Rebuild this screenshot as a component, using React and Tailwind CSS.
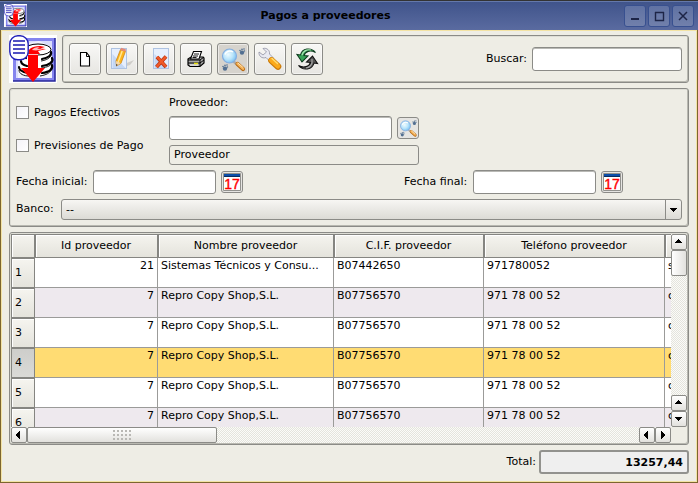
import React from "react";

const FIELD =
  "h-6 min-w-0 rounded-[3px] border border-[#8b8b87] bg-white px-1 shadow-[inset_0_1px_0_#b9b9b5] outline-none";
const TOOL =
  "flex size-8 shrink-0 items-center justify-center rounded-[3px] border border-[#8b8b87] shadow-[inset_0_0_0_1px_#ffffff80]";
const SMALL =
  "flex size-[22px] shrink-0 items-center justify-center rounded-[3px] border border-[#8b8b87] bg-[#e6e5e2]";
const GROUP = "rounded-[3px] border border-[#8b8b87] shadow-[inset_-1px_-1px_0_#b8b8b0,inset_1px_1px_0_#deded6]";
const SCROLL_BTN =
  "flex size-4 shrink-0 items-center justify-center rounded-[2px] border border-[#8b8b87] bg-linear-to-b from-white to-[#e2e1dd]";
const TRACK = "bg-[repeating-conic-gradient(#e4e4dd_0_25%,#fbfbf8_0_50%)] bg-[length:2px_2px]";
const HEAD =
  "overflow-hidden border-r border-b border-[#858581] bg-linear-to-b from-[#f6f5f0] to-[#e4e3dc] p-0 font-normal shadow-[inset_1px_1px_0_#858581,inset_2px_2px_0_#fff]";

function PaymentsLogo({ className }) {
  return (
    <svg viewBox="0 0 48 48" className={className} aria-hidden="true">
      <rect width="48" height="48" fill="#fff" />
      <path d="M4 3H46V46H4z" fill="#8484ee" />
      <path d="M4 46H46V3" fill="none" stroke="#26269a" strokeWidth="1.5" />
      <path d="M7 6H43V43H7z" fill="#d9dcfb" />
      <path d="M9 18L20 8 30 6 43 12V43H9z" fill="#fff" opacity=".6" />
      <g fill="#fff">
        <ellipse cx="26" cy="34" rx="17" ry="7" />
        <ellipse cx="27" cy="27" rx="16" ry="7" />
        <ellipse cx="28" cy="20" rx="15" ry="7" />
      </g>
      <g fill="none" stroke="#000" strokeWidth="2.200" strokeLinecap="round">
        <path d="M42 17c1 3-3 6-9 7M43 23c2 4-3 7-10 8M43 30c1 4-2 7-10 8M17 23c-2-1-3-2-3-4M18 31c-4-1-6-3-6-5M19 38c-6-1-9-3-9-6" />
      </g>
      <g fill="none" stroke="#000" strokeWidth=".9">
        <path d="M42 20c-1 3-4 5-10 6M43 27c-1 4-4 5-11 6M42 35c-1 3-5 5-11 6M10 35c0 4 5 6 10 6" />
      </g>
      <ellipse cx="29" cy="14.500" rx="13" ry="5.500" fill="#fff" stroke="#000" strokeWidth="1" />
      <path d="M20 19c-2-4 2-8 11-8l5 1-5 1.500 6 .5-8 2 2 3H20z" fill="#f00" />
      <path d="M23 15c1-2 4-3 8-3l-3 1.500 6 .7-7 1.300z" fill="#fbb" />
      <path d="M19 19h10v14h7L24 47 12 33h7z" fill="#f00" />
      <path d="M19 19.500h10" stroke="#fbb" />
      <rect x=".8" y=".8" width="18.4" height="24" rx="8" fill="#fff" stroke="#2222b8" strokeWidth="1.400" />
      <path d="M4 6h12M4 10h12M4 14h12M4 18h12" stroke="#1818b0" strokeWidth="1.700" />
    </svg>
  );
}

function NewIcon() {
  return (
    <svg viewBox="0 0 28 28" className="size-7" aria-hidden="true">
      <path d="M9.500 7.500h6l3 4v9.500h-9z" fill="#fff" stroke="#000" strokeWidth="1.100" />
      <path d="M15.500 7.500v4h3" fill="none" stroke="#000" />
    </svg>
  );
}

function Sheet({ x }) {
  return (
    <g>
      <rect x={x} y="3.500" width="15" height="20" fill="#e6effd" stroke="#aec3e2" />
      <path d={`M${x + 1} 23V9L${x + 14} 23z`} fill="#c3d7f5" />
    </g>
  );
}

function EditIcon() {
  return (
    <svg viewBox="0 0 28 28" className="size-7" aria-hidden="true">
      <path d="M14 20l12-5-4 5-10 3z" fill="#cfcdc9" />
      <Sheet x={3.5} />
      <path d="M12.500 4.500l5 1.800-4.500 12-4.500 2.700-.5-5z" fill="#fdb51d" stroke="#c67d0e" strokeWidth=".7" />
      <path d="M14.200 6l-4 11" stroke="#ffe895" strokeWidth="1.400" />
      <path d="M13.200 2.700l5 1.800-.9 2.300-5-1.800z" fill="#e58a78" />
      <path d="M8 16l4.800 1.900-4.300 3.100z" fill="#f5d9ac" />
      <path d="M8.200 19l1.500.8-1.500 1.500z" fill="#333" />
    </svg>
  );
}

function DeleteIcon() {
  return (
    <svg viewBox="0 0 28 28" className="size-7" aria-hidden="true">
      <Sheet x={8.500} />
      <path d="M12 12l9 10M21 11.500L11.500 22" stroke="#b93516" strokeWidth="3.800" />
      <path d="M12 11.800l9 10M21 11.500L11.500 22" stroke="#f05a28" strokeWidth="2.400" />
    </svg>
  );
}

function PrintIcon() {
  return (
    <svg viewBox="0 0 28 28" className="size-7" aria-hidden="true">
      <path d="M6 14l3-2h12l1 1v5l-4 3.500H8L6 20z" fill="#aaa" stroke="#000" strokeWidth="1.200" />
      <path d="M8.500 14l3-7.500h8l-2.500 7.500z" fill="#fff" stroke="#000" strokeWidth="1.100" />
      <path d="M12 9h5M11 11h5M10.500 12.500h4" stroke="#000" strokeWidth=".9" />
      <path d="M6 15h12v6M18 15l4-3M6 18h12l4-3" fill="none" stroke="#000" />
      <path d="M8 20h8" stroke="#fff" />
      <path d="M12 18.500h4" stroke="#e8df10" strokeWidth="1.500" />
    </svg>
  );
}

function Paw({ x, y }) {
  return (
    <g transform={`translate(${x} ${y})`} fill="#526f91">
      <circle cx="2" cy="3.600" r="2.200" />
      <circle cx="0" cy="1.500" r=".8" />
      <circle cx="2" cy=".4" r=".8" />
      <circle cx="4" cy="0" r=".8" />
      <circle cx="4.400" cy="2" r=".8" />
    </g>
  );
}

function SearchIcon({ className }) {
  return (
    <svg viewBox="0 0 28 28" className={className} aria-hidden="true">
      <defs>
        <radialGradient id="lens" cx=".4" cy=".4" r=".65">
          <stop offset="0" stopColor="#effcff" />
          <stop offset=".55" stopColor="#b8e4fb" />
          <stop offset="1" stopColor="#74bdf0" />
        </radialGradient>
      </defs>
      <path d="M14 16l4 3.500" stroke="#aaa" strokeWidth="2.500" />
      <path d="M18.500 19l5.500 5" stroke="#b86a12" strokeWidth="4.200" strokeLinecap="round" />
      <path d="M18.500 18.600l5.500 5" stroke="#f5b45b" strokeWidth="2.600" strokeLinecap="round" />
      <path d="M18.800 18l5 4.200" stroke="#ffe7b7" />
      <circle cx="10.500" cy="11" r="7" fill="url(#lens)" stroke="#86aee0" strokeWidth="1.200" />
      <path d="M6 9.500C7 6 11 5 14 7" fill="none" stroke="#fff" strokeWidth="1.500" />
      <Paw x={21} y={4} />
      <Paw x={4} y={20} />
    </svg>
  );
}

function WrenchIcon() {
  return (
    <svg viewBox="0 0 28 28" className="size-7" aria-hidden="true">
      <path
        d="M7 3.500c4-1 7 2 6.500 5.500l4 4-3.500 3.500-4-4C6 14 2.500 11 3 7l4 3 3.500-3z"
        fill="#e9eaf2"
        stroke="#8f91a2"
        strokeWidth=".8"
      />
      <path d="M15.500 15.500l6.500 6" stroke="#c97909" strokeWidth="6.600" strokeLinecap="round" />
      <path d="M15.500 15.200l6.300 5.800" stroke="#fba91b" strokeWidth="5" strokeLinecap="round" />
      <path d="M16 13.500l5.500 5" stroke="#ffdc70" strokeWidth="1.500" strokeLinecap="round" />
    </svg>
  );
}

function RefreshIcon() {
  return (
    <svg viewBox="0 0 28 28" className="size-7" aria-hidden="true">
      <path
        d="M22.500 7.500C18 2 9 3 7.500 10L4 9.500l5 7.500 6-6-4-.5c1-4 6-6 11.500-3z"
        fill="#38a458"
        stroke="#103d20"
        strokeWidth="1.100"
      />
      <path d="M9 10C10 6 14 4 18 5" fill="none" stroke="#a7e6b3" strokeWidth="1.200" />
      <path
        d="M5.500 20.500C10 26 19.500 25 21 18l3.500.5-5-7.500-6 6 4 .5c-1 4-6.500 6-12 3z"
        fill="#555"
        stroke="#111"
        strokeWidth="1.100"
      />
      <path d="M19 14v4c-1 3-3 4.500-6 5" fill="none" stroke="#a4a4a4" strokeWidth="1.200" />
    </svg>
  );
}

function CalendarButton({ label }) {
  return (
    <button type="button" aria-label={label} className={SMALL}>
      <svg viewBox="0 0 18 18" className="size-[18px]" aria-hidden="true">
        <path d="M.5 .5h17v17H.5z" fill="#fff" stroke="#92928e" />
        <path d="M1 1h16v2H1z" fill="#0b4da8" />
        <path d="M1 3h16v1H1z" fill="#0a2c60" />
        <text
          x="9"
          y="16"
          textAnchor="middle"
          fill="#f00"
          stroke="#f00"
          strokeWidth=".4"
          className="font-['Liberation_Sans',sans-serif] text-[14px]"
        >
          17
        </text>
      </svg>
    </button>
  );
}

const ARROWS = {
  up: "M4 1h1v1h1v1h1v1h1v1H1V4h1V3h1V2h1z",
  down: "M1 2h7v1H7v1H6v1H5v1H4V5H3V4H2V3H1z",
  left: "M6 0v8H5V7H4V6H3V5H2V3h1V2h1V1h1V0z",
  right: "M3 0v8h1V7h1V6h1V5h1V3H6V2H5V1H4V0z",
};

function Arrow({ dir }) {
  return (
    <svg viewBox="0 0 10 8" className="h-2 w-2.5" shapeRendering="crispEdges" aria-hidden="true">
      <path d={ARROWS[dir]} />
    </svg>
  );
}

function ScrollButton({ dir, label }) {
  return (
    <button type="button" aria-label={label} className={SCROLL_BTN}>
      <Arrow dir={dir} />
    </button>
  );
}

const TOOLS = [
  ["Nuevo", NewIcon],
  ["Editar", EditIcon],
  ["Borrar", DeleteIcon],
  ["Imprimir", PrintIcon],
  ["Filtrar", SearchIcon],
  ["Configurar", WrenchIcon],
  ["Actualizar", RefreshIcon],
];

const COPY = ["7", "Repro Copy Shop,S.L.", "B07756570", "971 78 00 52", "c"];
const ROWS = [
  ["21", "Sistemas Técnicos y Consu...", "B07442650", "971780052", "s"],
  COPY,
  COPY,
  COPY,
  COPY,
  COPY,
];

const WINDOW_BTN =
  "flex size-[22px] items-center justify-center rounded-[3px] border border-[#38508f] bg-linear-to-b from-[#6072a3] to-[#7180ab]";

export default function App() {
  return (
    <div className="flex h-screen min-h-[400px] flex-col overflow-hidden bg-[#eeede5] font-['DejaVu_Sans',sans-serif] text-[11px] leading-4 text-black">
      <header className="flex h-[30px] shrink-0 items-center border-t border-[#333] bg-linear-to-b from-[#3f538a] to-[#5a6ba0] px-1 shadow-[inset_0_1px_0_#6478aa]">
        <PaymentsLogo className="size-[23px]" />
        <h1 className="min-w-0 flex-1 text-center font-bold">Pagos a proveedores</h1>
        <div className="flex gap-0.5">
          <button type="button" aria-label="Minimizar" className={WINDOW_BTN}>
            <svg viewBox="0 0 12 12" className="size-3"><path d="M2 9h8" stroke="#1d2547" strokeWidth="2" /></svg>
          </button>
          <button type="button" aria-label="Maximizar" className={WINDOW_BTN}>
            <svg viewBox="0 0 12 12" className="size-3"><path d="M2.500 2v8.500h8V2M2 2.500h9" fill="none" stroke="#1d2547" strokeWidth="1.400" /></svg>
          </button>
          <button type="button" aria-label="Cerrar" className={WINDOW_BTN}>
            <svg viewBox="0 0 12 12" className="size-3"><path d="M2 2l8 8M10 2l-8 8" stroke="#1d2547" strokeWidth="1.500" /></svg>
          </button>
        </div>
      </header>

      <main className="flex min-h-0 flex-1 flex-col gap-[5px] border-x border-b border-[#7c662f] px-2 pt-[5px] pb-2 shadow-[inset_0_0_0_1px_#f3e3a4]">
        <div className="flex shrink-0 gap-[5px]">
          <PaymentsLogo className="size-12 shrink-0" />
          <div className={`${GROUP} flex h-12 min-w-0 flex-1 items-center gap-[5px] px-1.5`}>
            {TOOLS.map(([label, Icon]) => (
              <button
                key={label}
                type="button"
                aria-label={label}
                className={`${TOOL} ${label === "Filtrar" ? "bg-[#d6d3cd]" : "bg-linear-to-b from-[#f8f8f6] to-[#e7e6e2]"}`}
              >
                <Icon className="size-7" />
              </button>
            ))}
            <label htmlFor="buscar" className="ml-auto">Buscar:</label>
            <input id="buscar" type="text" className={`${FIELD} w-[150px]`} />
          </div>
        </div>

        <section className={`${GROUP} flex shrink-0 flex-col gap-[5px] p-1.5`}>
          <div className="flex">
            <div className="flex w-[153px] shrink-0 flex-col gap-[18px] pt-2.5">
              {["Pagos Efectivos", "Previsiones de Pago"].map((text) => (
                <label key={text} className="flex h-[15px] items-center gap-[5px]">
                  <input
                    type="checkbox"
                    className="size-[13px] appearance-none border border-[#8b8b87] bg-linear-to-br from-[#f4f3f8] to-white checked:bg-[#ffdc73]"
                  />
                  {text}
                </label>
              ))}
            </div>
            <div className="flex w-[250px] flex-col gap-[5px]">
              <label htmlFor="proveedor">Proveedor:</label>
              <div className="flex items-center gap-[5px]">
                <input id="proveedor" type="text" className={`${FIELD} flex-1`} />
                <button type="button" aria-label="Buscar proveedor" className={SMALL}>
                  <SearchIcon className="size-5" />
                </button>
              </div>
              <output className="h-5 rounded-[3px] border border-[#8b8b87] px-1 leading-[18px]">Proveedor</output>
            </div>
          </div>

          <div className="flex items-center gap-[5px]">
            <label htmlFor="inicial" className="w-[72px] whitespace-nowrap">Fecha inicial:</label>
            <input id="inicial" type="text" className={`${FIELD} w-[123px]`} />
            <CalendarButton label="Elegir fecha inicial" />
            <span className="grow-[14]" />
            <label htmlFor="final" className="w-16 whitespace-nowrap">Fecha final:</label>
            <input id="final" type="text" className={`${FIELD} w-[123px]`} />
            <CalendarButton label="Elegir fecha final" />
            <span className="grow-[5]" />
          </div>

          <div className="flex gap-[5px]">
            <label htmlFor="banco" className="w-10 pt-0.5">Banco:</label>
            <div className="relative flex-1">
              <select
                id="banco"
                className="block h-[21px] w-full appearance-none rounded-[3px] border border-[#8b8b87] bg-linear-to-b from-[#f7f6f3] to-[#dcdbd6] px-1 outline-none"
              >
                <option>--</option>
              </select>
              <span className="pointer-events-none absolute inset-y-0 right-0 flex w-[17px] items-center justify-center border-l border-[#8b8b87]">
                <Arrow dir="down" />
              </span>
            </div>
          </div>
        </section>

        <section className={`${GROUP} flex min-h-0 flex-1 flex-col p-px`}>
          <div className="flex min-h-0 flex-1">
            <div className="min-w-0 flex-1 overflow-hidden bg-white">
              <table className="w-[760px] table-fixed border-separate border-spacing-0">
                <colgroup>
                  <col className="w-6" />
                  <col className="w-[123px]" />
                  <col className="w-44" />
                  <col className="w-[150px]" />
                  <col className="w-[181px]" />
                  <col />
                </colgroup>
                <thead>
                  <tr className="h-6">
                    <td className={HEAD} />
                    <th scope="col" className={HEAD}>Id proveedor</th>
                    <th scope="col" className={HEAD}>Nombre proveedor</th>
                    <th scope="col" className={HEAD}>C.I.F. proveedor</th>
                    <th scope="col" className={HEAD}>Teléfono proveedor</th>
                    <td className={HEAD} />
                  </tr>
                </thead>
                <tbody>
                  {ROWS.map((row, r) => (
                    <tr key={r} className={`h-[30px] ${r === 3 ? "bg-[#ffdc73]" : r % 2 ? "bg-[#eee9ee]" : "bg-white"}`}>
                      <th
                        scope="row"
                        className={`border-r border-b border-[#858581] bg-linear-to-b p-0 pl-1 text-left font-normal ${
                          r === 3
                            ? "from-[#cdcdca] to-[#dadad7] shadow-[inset_1px_1px_0_#858581]"
                            : "from-[#f6f5f0] to-[#e4e3dc] shadow-[inset_1px_1px_0_#858581,inset_2px_2px_0_#fff]"
                        }`}
                      >
                        {r + 1}
                      </th>
                      {row.map((cell, c) => (
                        <td
                          key={c}
                          className={`whitespace-nowrap border-r border-b border-[#9b9b99] px-[3px] py-0 align-top ${c === 0 ? "text-right" : ""}`}
                        >
                          {cell}
                        </td>
                      ))}
                    </tr>
                  ))}
                </tbody>
              </table>
            </div>
            <div className={`${TRACK} flex w-4 shrink-0 flex-col`}>
              <ScrollButton dir="up" label="Subir" />
              <div className="h-[26px] rounded-[2px] border border-[#8b8b87] bg-linear-to-r from-white to-[#e2e1dd]" />
              <div className="flex-1" />
              <ScrollButton dir="up" label="Línea anterior" />
              <ScrollButton dir="down" label="Línea siguiente" />
            </div>
          </div>
          <div className="flex h-4 shrink-0">
            <div className={`${TRACK} flex min-w-0 flex-1`}>
              <ScrollButton dir="left" label="Izquierda" />
              <div className="flex w-[190px] items-center justify-center rounded-[2px] border border-[#8b8b87] bg-linear-to-b from-white to-[#e2e1dd]">
                <span className="h-3 w-5 bg-[radial-gradient(#b9b8b4_1px,transparent_1px)] bg-[length:4px_4px]" />
              </div>
              <div className="flex-1" />
              <ScrollButton dir="left" label="Columna anterior" />
              <ScrollButton dir="right" label="Columna siguiente" />
            </div>
            <div className="w-4" />
          </div>
        </section>

        <footer className="flex shrink-0 items-center justify-end gap-[3px]">
          <label htmlFor="total">Total:</label>
          <input
            id="total"
            type="text"
            readOnly
            defaultValue="13257,44"
            className="h-6 w-[150px] rounded-[3px] border-2 border-[#92928e] bg-[#efefef] px-1 text-right font-bold outline-none"
          />
        </footer>
      </main>
    </div>
  );
}
